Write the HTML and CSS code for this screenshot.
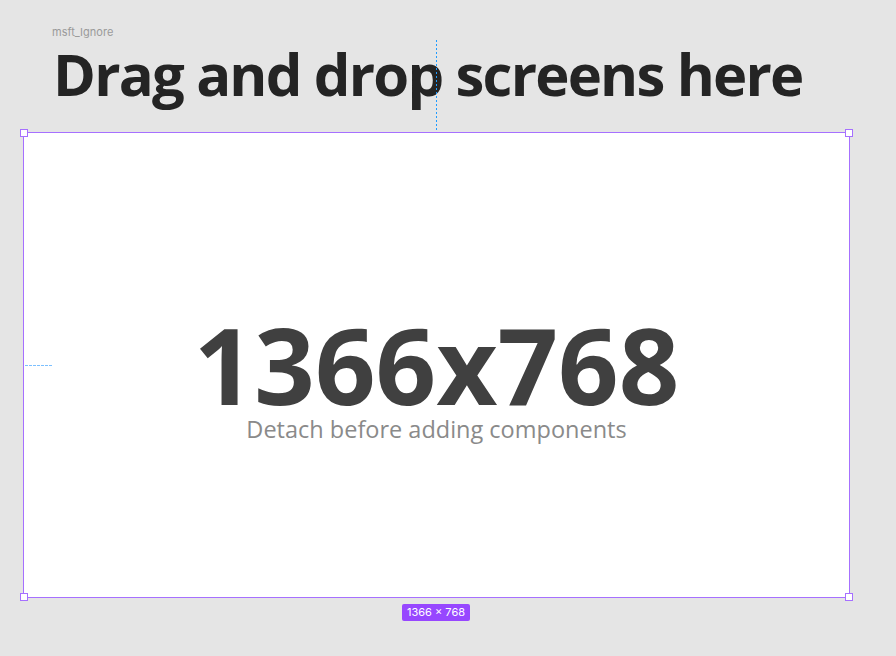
FILE: index.html
```html
<!DOCTYPE html>
<html lang="en">
<head>
    <meta charset="UTF-8">
    <meta name="viewport" content="width=device-width, initial-scale=1.0">
    <title>msft_Ignore</title>
    <link rel="stylesheet" href="styles.css">
</head>
<body>
    <div class="canvas">
        <div class="layer-name">msft_Ignore</div>
        <h1 class="title">Drag and drop screens here</h1>
        <div class="guide guide-v"></div>
        <div class="frame">
            <span class="handle tl"></span>
            <span class="handle tr"></span>
            <span class="handle bl"></span>
            <span class="handle br"></span>
            <div class="guide guide-h"></div>
            <div class="frame-body">
                <div class="size">1366x768</div>
                <div class="hint">Detach before adding components</div>
            </div>
        </div>
        <div class="badge-row">
            <span class="badge">1366 × 768</span>
        </div>
    </div>
</body>
</html>
```

FILE: styles.css
```css
*{
    margin: 0;
    padding: 0;
    box-sizing: border-box;
}
body{
    background-color: #e5e5e5;
    font-family: "Open Sans", "Noto Sans", sans-serif;
    width: 896px;
    height: 656px;
    overflow: hidden;
}
.canvas{
    position: relative;
    padding-top: 25px;
}
.layer-name{
    margin-left: 52px;
    font-family: Inter, "Noto Sans", sans-serif;
    font-size: 11px;
    line-height: 14px;
    color: #9a9a9a;
}
.title{
    margin-left: 53px;
    margin-top: 13px;
    font-size: 58px;
    font-weight: 700;
    line-height: 44px;
    letter-spacing: -1.8px;
    color: #242424;
    height: 80px;
}
.guide-v{
    position: absolute;
    left: 436px;
    top: 40px;
    width: 1px;
    height: 91px;
    background: repeating-linear-gradient(#1e9bff 0 2px, transparent 2px 4px);
}
.frame{
    position: relative;
    margin-left: 23px;
    width: 827px;
    height: 466px;
    background-color: #fff;
    border: 1px solid #a670ff;
}
.handle{
    position: absolute;
    width: 8px;
    height: 8px;
    background-color: #fff;
    border: 1px solid #a670ff;
}
.tl{ left: -4px; top: -4px; }
.tr{ right: -4px; top: -4px; }
.bl{ left: -4px; bottom: -4px; }
.br{ right: -4px; bottom: -4px; }
.guide-h{
    position: absolute;
    left: 1px;
    top: 232px;
    width: 28px;
    height: 1px;
    background: repeating-linear-gradient(to right, #7cc0ff 0 3px, transparent 3px 4px);
}
.frame-body{
    height: 100%;
    display: flex;
    flex-direction: column;
    align-items: center;
    justify-content: center;
    padding-top: 27px;
}
.size{
    font-size: 106px;
    font-weight: 700;
    line-height: 100px;
    color: #404040;
}
.hint{
    font-size: 23.5px;
    line-height: 30px;
    color: #8a8a8a;
}
.badge-row{
    display: flex;
    justify-content: center;
    margin-top: 6px;
    padding-right: 24px;
}
.badge{
    background-color: #9747ff;
    color: #fff;
    font-family: Inter, "Noto Sans", sans-serif;
    font-size: 11px;
    line-height: 17px;
    padding: 0 5px;
    border-radius: 2px;
}
```
